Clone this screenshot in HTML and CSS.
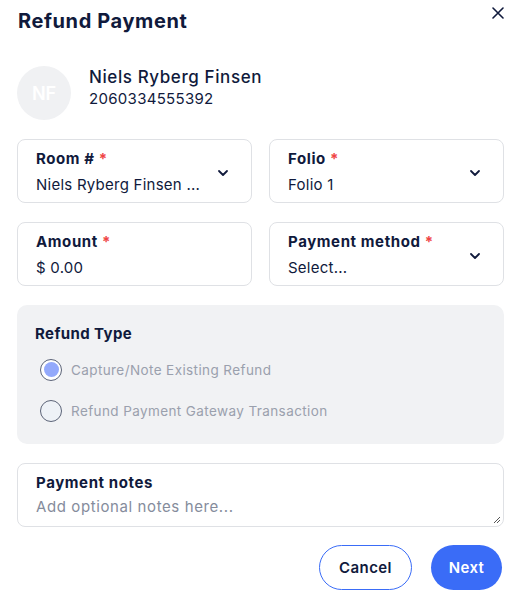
FILE: index.html
```html
<!DOCTYPE html>
<html lang="en">
  <head>
    <meta charset="UTF-8" />
    <meta name="viewport" content="width=device-width, initial-scale=1.0" />
    <title>Refund Payment</title>
    <link rel="stylesheet" href="styles.css">
  </head>
  <body>
    <div class="dialog">
      <header class="head">
        <h1>Refund Payment</h1>
        <button class="close" aria-label="Close">
          <svg width="12" height="12" viewBox="0 0 12 12">
            <path d="M1 1 L11 11 M11 1 L1 11" stroke="#101a3c" stroke-width="1.6" stroke-linecap="round" />
          </svg>
        </button>
      </header>

      <div class="guest">
        <div class="avatar">NF</div>
        <div>
          <div class="guest-name">Niels Ryberg Finsen</div>
          <div class="guest-id">2060334555392</div>
        </div>
      </div>

      <section class="fields">
        <div class="field">
          <div>
            <div class="label">Room # <span class="req">*</span></div>
            <div class="value">Niels Ryberg Finsen ...</div>
          </div>
          <svg class="chev" width="12" height="8" viewBox="0 0 12 8">
            <path d="M2 2 L6 6 L10 2" fill="none" stroke="#101a3c" stroke-width="1.8" stroke-linecap="round" stroke-linejoin="round" />
          </svg>
        </div>
        <div class="field">
          <div>
            <div class="label">Folio <span class="req">*</span></div>
            <div class="value">Folio 1</div>
          </div>
          <svg class="chev" width="12" height="8" viewBox="0 0 12 8">
            <path d="M2 2 L6 6 L10 2" fill="none" stroke="#101a3c" stroke-width="1.8" stroke-linecap="round" stroke-linejoin="round" />
          </svg>
        </div>
        <div class="field">
          <div>
            <div class="label">Amount <span class="req">*</span></div>
            <div class="value">$ 0.00</div>
          </div>
        </div>
        <div class="field">
          <div>
            <div class="label">Payment method <span class="req">*</span></div>
            <div class="value">Select...</div>
          </div>
          <svg class="chev" width="12" height="8" viewBox="0 0 12 8">
            <path d="M2 2 L6 6 L10 2" fill="none" stroke="#101a3c" stroke-width="1.8" stroke-linecap="round" stroke-linejoin="round" />
          </svg>
        </div>
      </section>

      <section class="refund-type">
        <h2>Refund Type</h2>
        <div class="option">
          <span class="radio checked"></span>
          <span>Capture/Note Existing Refund</span>
        </div>
        <div class="option">
          <span class="radio"></span>
          <span>Refund Payment Gateway Transaction</span>
        </div>
      </section>

      <div class="notes">
        <div class="label">Payment notes</div>
        <div class="placeholder">Add optional notes here...</div>
        <svg class="grip" width="8" height="8" viewBox="0 0 8 8">
          <path d="M7 1 L1 7 M7 4 L4 7" stroke="#555" stroke-width="1" />
        </svg>
      </div>

      <footer class="actions">
        <button class="btn btn-outline">Cancel</button>
        <button class="btn btn-primary">Next</button>
      </footer>
    </div>
  </body>
</html>
```

FILE: styles.css
```css
body {
  margin: 0;
  background-color: #ffffff;
  font-family: Inter, "Noto Sans", sans-serif;
  color: #101a3c;
}

.dialog {
  padding: 0 11px 0 17px;
}

.head {
  display: flex;
  justify-content: space-between;
  align-items: flex-start;
}

h1 {
  margin: 8px 0 0 1px;
  font-size: 20px;
  line-height: 26px;
  font-weight: 700;
  letter-spacing: 0.6px;
}

.close {
  border: none;
  background: none;
  padding: 0;
  margin: 7px 0 0 0;
  width: 12px;
  height: 12px;
  cursor: pointer;
}

.guest {
  display: flex;
  align-items: center;
  gap: 18px;
  margin-top: 32px;
}

.avatar {
  width: 54px;
  height: 54px;
  border-radius: 50%;
  background-color: #f0f1f3;
  color: #ffffff;
  display: flex;
  align-items: center;
  justify-content: center;
  font-size: 18px;
  font-weight: 600;
}

.guest-name {
  font-size: 17px;
  font-weight: 500;
  line-height: 22px;
  margin-top: -11px;
  letter-spacing: 0.6px;
}

.guest-id {
  font-size: 15px;
  line-height: 22px;
  letter-spacing: 0.3px;
}

.fields {
  display: grid;
  grid-template-columns: 1fr 1fr;
  column-gap: 17px;
  row-gap: 19px;
  margin-top: 19px;
}

.field {
  height: 64px;
  box-sizing: border-box;
  border: 1px solid #dfe1e5;
  border-radius: 8px;
  padding: 8px 22px 0 18px;
  display: flex;
  justify-content: space-between;
  align-items: center;
}

.field > div {
  align-self: flex-start;
}

.label {
  font-size: 15px;
  font-weight: 700;
  line-height: 22px;
  letter-spacing: 0.6px;
}

.req {
  color: #ef4444;
}

.value {
  font-size: 15px;
  line-height: 30px;
  letter-spacing: 0.25px;
}

.chev {
  margin-bottom: 4px;
}

.refund-type {
  margin-top: 19px;
  background-color: #f1f2f4;
  border-radius: 10px;
  height: 139px;
  box-sizing: border-box;
  padding: 18px 18px 0 18px;
}

h2 {
  margin: 0 0 4px 0;
  font-size: 15px;
  line-height: 22px;
  font-weight: 700;
  letter-spacing: 0.4px;
}

.option {
  display: flex;
  align-items: center;
  gap: 9px;
  height: 41px;
  padding-left: 5px;
  font-size: 13.5px;
  letter-spacing: 0.4px;
  color: #9aa0ad;
}

.radio {
  width: 22px;
  height: 22px;
  border: 1.3px solid #5c6478;
  border-radius: 50%;
  background-color: #eef2f7;
  box-sizing: border-box;
  position: relative;
}

.radio.checked {
  background-color: #ffffff;
  border-color: #5c6478;
}

.radio.checked::after {
  content: "";
  position: absolute;
  inset: 2.5px;
  border-radius: 50%;
  background-color: #93a9fb;
}

.notes {
  margin-top: 19px;
  height: 64px;
  box-sizing: border-box;
  border: 1px solid #dfe1e5;
  border-radius: 8px;
  padding: 8px 18px 0 18px;
  position: relative;
}

.placeholder {
  font-size: 15px;
  line-height: 26px;
  letter-spacing: 0.6px;
  color: #858c9c;
}

.grip {
  position: absolute;
  right: 2px;
  bottom: 2px;
}

.actions {
  display: flex;
  justify-content: flex-end;
  gap: 19px;
  margin-top: 18px;
  padding-right: 2px;
}

.btn {
  height: 45px;
  border-radius: 23px;
  font-family: Inter, "Noto Sans", sans-serif;
  font-size: 15px;
  font-weight: 600;
  letter-spacing: 0.4px;
  cursor: pointer;
}

.btn-outline {
  width: 93px;
  background-color: #ffffff;
  border: 1px solid #3a6cf7;
  color: #101a3c;
}

.btn-primary {
  width: 71px;
  background-color: #3a6cf7;
  border: none;
  color: #ffffff;
}
```
